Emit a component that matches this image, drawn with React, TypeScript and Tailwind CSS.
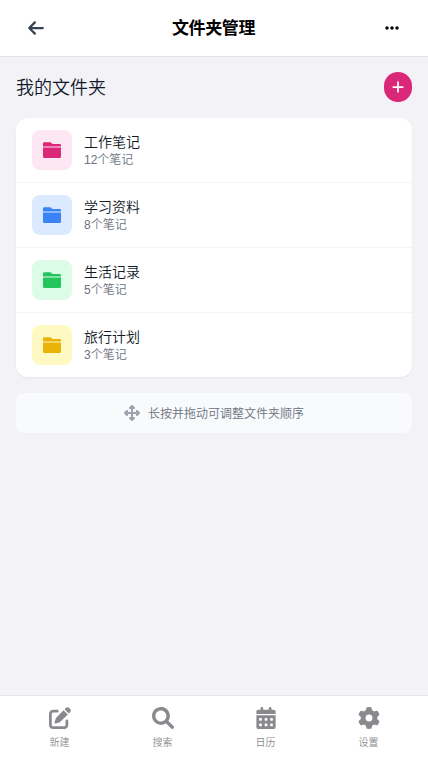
import {
  FaArrowLeft,
  FaCalendarDays,
  FaEllipsis,
  FaGear,
  FaPenToSquare,
  FaPlus,
  FaUpDownLeftRight,
} from 'react-icons/fa6';
import type { ComponentType } from 'react';

interface Folder {
  name: string;
  count: number;
  color: string;
}

interface Tab {
  label: string;
  Icon: ComponentType<{ className?: string }>;
}

const SearchIcon = ({ className }: { className?: string }) => (
  <svg className={className} viewBox="0 0 512 512" fill="currentColor">
    <path d="M500.3 443.7l-119.7-119.7c27.22-40.41 40.65-90.9 33.46-144.7C401.8 87.79 326.8 13.32 235.2 1.723C99.01-15.51-15.51 99.01 1.724 235.2c11.6 91.64 86.08 166.7 177.6 178.9c53.8 7.189 104.3-6.236 144.7-33.46l119.7 119.7c15.62 15.62 40.95 15.62 56.57 0C515.9 484.7 515.9 459.3 500.3 443.7zM79.1 208c0-70.58 57.42-128 128-128s128 57.42 128 128c0 70.58-57.42 128-128 128S79.1 278.6 79.1 208z" />
  </svg>
);

const FolderIcon = () => (
  <svg className="h-4 w-4.5" viewBox="0 0 18 16" fill="currentColor">
    <path d="M0 4.5V1.7Q0 .3 1.4 .3H7Q7.7 .3 8.2 .8L9.4 2H16.6Q18 2 18 3.4V4.5Z" />
    <path d="M0 5.4H18V14.5Q18 16 16.5 16H1.5Q0 16 0 14.5Z" />
  </svg>
);

const folders: Folder[] = [
  { name: '工作笔记', count: 12, color: 'bg-[#fce7f3] text-[#db2777]' },
  { name: '学习资料', count: 8, color: 'bg-[#dbeafe] text-[#3b82f6]' },
  { name: '生活记录', count: 5, color: 'bg-[#dcfce7] text-[#22c55e]' },
  { name: '旅行计划', count: 3, color: 'bg-[#fef9c3] text-[#eab308]' },
];

const tabs: Tab[] = [
  { label: '新建', Icon: FaPenToSquare },
  { label: '搜索', Icon: SearchIcon },
  { label: '日历', Icon: FaCalendarDays },
  { label: '设置', Icon: FaGear },
];

const FolderRow = ({ folder }: { folder: Folder }) => (
  <li className="flex items-center gap-3 px-4 py-3 border-b border-[#f3f4f6] last:border-b-0">
    <div className={`flex size-10 items-center justify-center rounded-lg ${folder.color}`}>
      <FolderIcon />
    </div>
    <div>
      <h3 className="text-sm text-[#111827]">{folder.name}</h3>
      <p className="text-xs text-[#6b7280]">{folder.count}个笔记</p>
    </div>
  </li>
);

const App = () => (
  <div className="flex h-screen flex-col overflow-hidden bg-[#f2f2f7] font-['Liberation_Sans','Noto_Sans_CJK_SC',sans-serif] font-[350]">
    <header className="flex h-[57px] shrink-0 items-center justify-between border-b border-[#e5e5e5] bg-white px-7">
      <button className="text-[#374151]" aria-label="返回">
        <FaArrowLeft className="h-4.5 w-4" />
      </button>
      <h1 className="pt-0.5 pr-px text-[17px] font-semibold tracking-[-0.4px] text-black">文件夹管理</h1>
      <button className="text-black" aria-label="更多">
        <FaEllipsis className="size-4" />
      </button>
    </header>

    <main className="flex-1 px-4 pt-[15px]">
      <div className="mb-4 flex items-center justify-between">
        <h2 className="pt-0.5 text-lg leading-7 text-[#111827]">我的文件夹</h2>
        <button
          className="flex h-[30px] w-7 items-center justify-center rounded-full bg-[#db2777] text-white"
          aria-label="新建文件夹"
        >
          <FaPlus className="size-3.5" />
        </button>
      </div>

      <ul className="overflow-hidden rounded-xl bg-white shadow-[0_1px_2px_rgba(0,0,0,0.05)]">
        {folders.map((folder) => (
          <FolderRow key={folder.name} folder={folder} />
        ))}
      </ul>

      {/* 拖动提示 */}
      <div className="mt-4 flex h-10 items-center justify-center gap-2 rounded-lg bg-[#f9fafb]">
        <FaUpDownLeftRight className="size-4 text-[#9ca3af]" />
        <p className="pt-0.5 text-xs text-[#6b7280]">长按并拖动可调整文件夹顺序</p>
      </div>
    </main>

    {/* 底部导航 */}
    <nav className="flex h-[65px] shrink-0 border-t border-[#e5e5ea] bg-white px-2 text-[#8a8a8e]">
      {tabs.map(({ label, Icon }) => (
        <button key={label} className="flex flex-1 flex-col items-center pt-[11px]">
          <Icon className="size-[22px]" />
          <span className="mt-1.5 text-[10px] leading-[15px]">{label}</span>
        </button>
      ))}
    </nav>
  </div>
);

export default App;
